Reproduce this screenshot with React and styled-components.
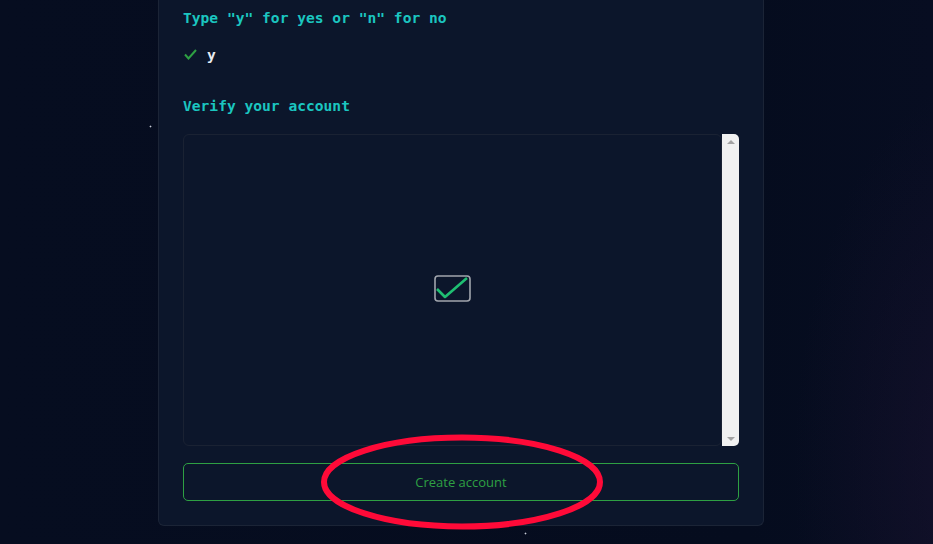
import React from "react";
import styled, { createGlobalStyle } from "styled-components";

const Global = createGlobalStyle`
  html, body { margin: 0; padding: 0; }
  body {
    background: #060d20;
    overflow: hidden;
  }
`;

const Page = styled.div`
  position: relative;
  width: 933px;
  height: 544px;
  box-sizing: border-box;
  padding-left: 158px;
  background:
    radial-gradient(circle at 150.5px 126.5px, rgba(220,225,235,0.9) 0.6px, transparent 1.2px),
    radial-gradient(circle at 525.5px 533.5px, rgba(220,225,235,0.9) 0.6px, transparent 1.2px),
    radial-gradient(ellipse 220px 460px at 980px 470px, rgba(32, 20, 52, 0.5), transparent 85%),
    linear-gradient(90deg, #060d20 0%, #050c1e 80%, #070d21 100%);
  overflow: hidden;
`;

const Card = styled.div`
  width: 606px;
  box-sizing: border-box;
  background: #0c162b;
  border: 1px solid #1b2436;
  border-top: none;
  border-radius: 0 0 6px 6px;
  padding: 8px 24px 24px 24px;
  display: flex;
  flex-direction: column;
`;

const Heading = styled.div`
  font-family: "DejaVu Sans Mono", "Liberation Mono", monospace;
  font-weight: bold;
  font-size: 14.6px;
  line-height: 20px;
  color: #1bc6c0;
  margin-top: ${(p) => p.$mt || 0}px;
`;

const Answer = styled.div`
  display: flex;
  align-items: center;
  gap: 10px;
  height: 20px;
  margin-top: 16px;
  padding-left: 1px;
  font-family: "DejaVu Sans Mono", "Liberation Mono", monospace;
  font-weight: bold;
  font-size: 14.6px;
  color: #e8ecf2;
`;

const Frame = styled.div`
  display: flex;
  height: 312px;
  margin-top: 18px;
`;

const FrameInner = styled.div`
  flex: 1;
  border: 1px solid #1a2233;
  border-radius: 6px;
  display: flex;
  align-items: center;
  justify-content: center;
  padding-bottom: 4px;
`;

const Scrollbar = styled.div`
  width: 17px;
  background: #f1f1f1;
  border-radius: 0 5px 5px 0;
  display: flex;
  flex-direction: column;
  justify-content: space-between;
  align-items: center;
  padding: 6px 0 5px;
  box-sizing: border-box;
`;

const Arrow = styled.div`
  width: 0;
  height: 0;
  border-left: 4px solid transparent;
  border-right: 4px solid transparent;
  ${(p) =>
    p.$down
      ? "border-top: 4px solid #a3a3a3;"
      : "border-bottom: 4px solid #a3a3a3;"}
`;

const ButtonWrap = styled.div`
  position: relative;
  margin-top: 17px;
`;

const Button = styled.button`
  width: 100%;
  height: 38px;
  box-sizing: border-box;
  background: transparent;
  border: 1px solid #2ea043;
  border-radius: 5px;
  color: #2ea043;
  font-family: "Open Sans", "Noto Sans", sans-serif;
  font-size: 13px;
  cursor: pointer;
`;

const Annotation = styled.svg`
  position: absolute;
  left: 136px;
  top: -30px;
  pointer-events: none;
  overflow: visible;
`;

export default function App() {
  return (
    <>
      <Global />
      <Page>
        <Card>
          <Heading>Type "y" for yes or "n" for no</Heading>
          <Answer>
            <svg width="13" height="11" viewBox="0 0 13 11">
              <polyline
                points="1,5.5 4.5,9.5 12,1"
                fill="none"
                stroke="#2ea043"
                strokeWidth="2"
              />
            </svg>
            <span>y</span>
          </Answer>
          <Heading $mt={32}>Verify your account</Heading>
          <Frame>
            <FrameInner>
              <svg width="37" height="27" viewBox="0 0 37 27">
                <rect
                  x="1"
                  y="1"
                  width="35"
                  height="25"
                  rx="3"
                  fill="none"
                  stroke="#a1a5ad"
                  strokeWidth="1.6"
                />
                <polyline
                  points="3,14 11,22 33,3"
                  fill="none"
                  stroke="#1fbf72"
                  strokeWidth="2.6"
                  strokeLinejoin="round"
                />
              </svg>
            </FrameInner>
            <Scrollbar>
              <Arrow />
              <Arrow $down />
            </Scrollbar>
          </Frame>
          <ButtonWrap>
            <Button>Create account</Button>
            <Annotation width="286" height="98" viewBox="0 0 286 98">
              <ellipse
                cx="143"
                cy="49"
                rx="138"
                ry="44.5"
                fill="none"
                stroke="#ff0a38"
                strokeWidth="6"
              />
            </Annotation>
          </ButtonWrap>
        </Card>
      </Page>
    </>
  );
}
